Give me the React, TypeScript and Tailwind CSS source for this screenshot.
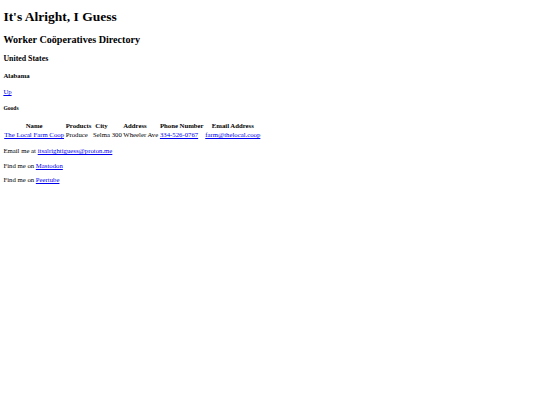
import React from "react";

// Plain browser-default page, scaled to fit a 540px window (1280 -> 540)
const A: React.FC<{ href: string; children: React.ReactNode }> = ({ href, children }) => (
  <a href={href} className="text-[#0000ee] underline">
    {children}
  </a>
);

const th = "px-[0.84px] py-[0.42px] leading-[1.3] text-center font-bold";
const td = "px-[0.84px] py-[0.42px] leading-[1.3]";

const App: React.FC = () => {
  return (
    <div className="bg-white min-h-screen">
      <div className="m-[3.375px] text-[6.75px] leading-[1.15] text-black font-['Liberation_Serif','Times_New_Roman',serif]">
        <h1 className="text-[2em] font-bold my-[0.67em]">It's Alright, I Guess</h1>
        <h2 className="text-[1.5em] font-bold my-[0.83em]">Worker Coöperatives Directory</h2>
        <h3 className="text-[1.17em] font-bold my-[1em]">United States</h3>
        <h4 className="text-[1em] font-bold my-[1.33em]">Alabama</h4>
        <p className="my-[1em]">
          <A href="#">Up</A>
        </p>
        <h5 className="text-[0.83em] font-bold my-[1.67em]">Goods</h5>
        <table className="border-separate border-spacing-[0.84px] indent-0">
          <thead>
            <tr>
              <th className={th}>Name</th>
              <th className={th}>Products</th>
              <th className={th}>City</th>
              <th className={th}>Address</th>
              <th className={th}>Phone Number</th>
              <th className={th}>Email Address</th>
            </tr>
          </thead>
          <tbody>
            <tr>
              <td className={td}>
                <A href="#">The Local Farm Coop</A>
              </td>
              <td className={td}>Produce</td>
              <td className={td}>Selma</td>
              <td className={td}>300 Wheeler Ave</td>
              <td className={td}>
                <A href="#">334-526-0767</A>
              </td>
              <td className={td}>
                <A href="#">farm@thelocal.coop</A>
              </td>
            </tr>
          </tbody>
        </table>
        <p className="my-[1em]">
          Email me at <A href="#">itsalrightiguess@proton.me</A>
        </p>
        <p className="my-[1em]">
          Find me on <A href="#">Mastodon</A>
        </p>
        <p className="my-[1em]">
          Find me on <A href="#">Peertube</A>
        </p>
      </div>
    </div>
  );
};

export default App;
